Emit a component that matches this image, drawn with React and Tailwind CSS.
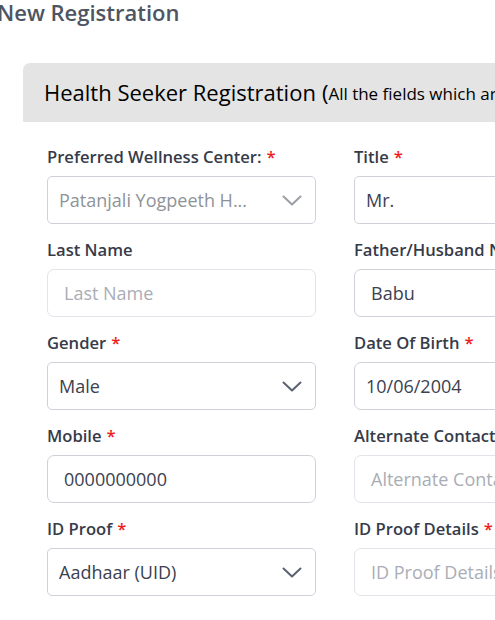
import React from "react";

const Chevron = ({ muted }) => (
  <svg width="20" height="11" viewBox="0 0 20 11" fill="none" className="shrink-0">
    <path d="M1.5 1.5 L10 9.5 L18.5 1.5" stroke={muted ? "#9a9ea5" : "#5a6270"} strokeWidth="2" strokeLinecap="round" strokeLinejoin="round" />
  </svg>
);

const Req = () => <span className="text-[#ef1c1c] ml-[5px]">*</span>;

function Label({ text, req }) {
  return (
    <div className="h-[20px] leading-[20px] text-[16.6px] font-semibold text-[#363b4a] whitespace-nowrap">
      {text}
      {req && <Req />}
    </div>
  );
}

function SelectBox({ value, muted }) {
  return (
    <div className="mt-[9px] h-[48px] rounded-[5px] border border-[#ced1d8] bg-white flex items-center pl-[11px] pr-[13px] justify-between overflow-hidden">
      <span className={`text-[18px] whitespace-nowrap ${muted ? "text-[#8f9399]" : "text-[#3b4150]"}`}>{value}</span>
      <Chevron muted={muted} />
    </div>
  );
}

function TextBox({ value, placeholder, pl = "pl-[11px]" }) {
  return (
    <div className={`mt-[9px] h-[48px] rounded-[7px] border bg-white flex items-center ${pl} overflow-hidden whitespace-nowrap ${value ? "border-[#ced1d8]" : "border-[#e2e4ea]"}`}>
      {value ? (
        <span className="text-[18px] text-[#3b4150]">{value}</span>
      ) : (
        <span className="text-[18px] text-[#a9adb6]">{placeholder}</span>
      )}
    </div>
  );
}

function Field({ label, req, children }) {
  return (
    <div className="flex flex-col">
      <Label text={label} req={req} />
      {children}
    </div>
  );
}

export default function App() {
  return (
    <div className="w-[495px] h-[620px] overflow-hidden bg-white" style={{ fontFamily: '"Open Sans", sans-serif' }}>
      <div className="w-[900px]">
        <div className="ml-[-3px] mt-[-2px] h-[28px] leading-[28px] text-[22px] font-semibold text-[#4d5562]">New Registration</div>
        <div className="ml-[23px] mt-[37px]">
          <div className="h-[59px] bg-[#e4e4e4] rounded-tl-[7px] flex items-center pl-[21px] whitespace-nowrap text-black">
            <span className="text-[22px]">Health Seeker Registration</span>
            <span className="text-[22px] ml-[6px]">(</span>
            <span className="text-[17px] mt-[3px]">All the fields which are marked with * are mandatory)</span>
          </div>
          <div className="pl-[24px] pt-[25px] grid grid-cols-[269px_269px_269px] gap-x-[38px] gap-y-[16px]">
            <Field label="Preferred Wellness Center:" req>
              <SelectBox value="Patanjali Yogpeeth H..." muted />
            </Field>
            <Field label="Title" req>
              <SelectBox value="Mr." />
            </Field>
            <Field label="First Name" req>
              <TextBox value="Ram" pl="pl-[16px]" />
            </Field>
            <Field label="Last Name">
              <TextBox placeholder="Last Name" pl="pl-[16px]" />
            </Field>
            <Field label="Father/Husband Name">
              <TextBox value="Babu" pl="pl-[16px]" />
            </Field>
            <Field label="Email">
              <TextBox placeholder="Email" pl="pl-[16px]" />
            </Field>
            <Field label="Gender" req>
              <SelectBox value="Male" />
            </Field>
            <Field label="Date Of Birth" req>
              <TextBox value="10/06/2004" />
            </Field>
            <Field label="Age">
              <TextBox value="20" pl="pl-[16px]" />
            </Field>
            <Field label="Mobile" req>
              <TextBox value="0000000000" pl="pl-[16px]" />
            </Field>
            <Field label="Alternate Contact No.">
              <TextBox placeholder="Alternate Contact No." pl="pl-[16px]" />
            </Field>
            <Field label="Address">
              <TextBox placeholder="Address" pl="pl-[16px]" />
            </Field>
            <Field label="ID Proof" req>
              <SelectBox value="Aadhaar (UID)" />
            </Field>
            <Field label="ID Proof Details" req>
              <TextBox placeholder="ID Proof Details" pl="pl-[16px]" />
            </Field>
            <Field label="City">
              <TextBox placeholder="City" pl="pl-[16px]" />
            </Field>
          </div>
        </div>
      </div>
    </div>
  );
}
